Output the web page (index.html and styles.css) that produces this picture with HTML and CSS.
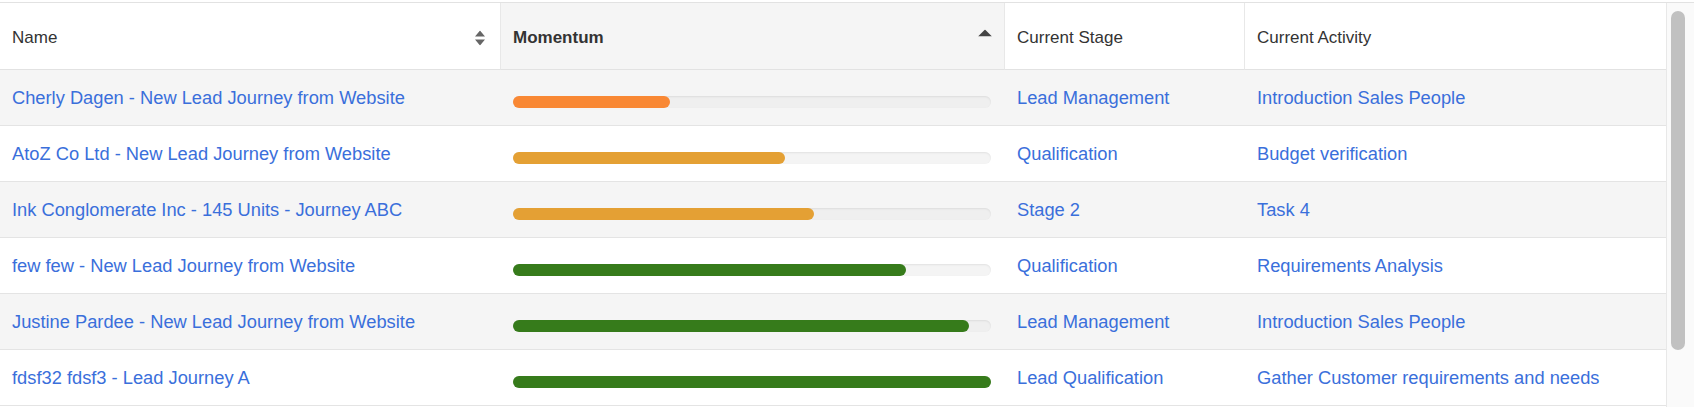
FILE: index.html
```html
<!DOCTYPE html>
<html>
<head>
  <title>Journeys</title>
  <link rel="stylesheet" href="styles.css">
</head>
<body>
  <div class="grid-wrap">
    <table class="journeys">
      <colgroup>
        <col class="col-name">
        <col class="col-momentum">
        <col class="col-stage">
        <col class="col-activity">
      </colgroup>
      <thead>
        <tr>
          <th class="sortable">
            <span>Name</span>
            <svg class="sort-icon" width="10" height="15" viewBox="0 0 10 15"><path d="M5 0 L10 6 L0 6 Z M5 15 L10 9 L0 9 Z" fill="#666"/></svg>
          </th>
          <th class="sortable sorted">
            <span>Momentum</span>
            <svg class="sort-icon" width="14" height="7" viewBox="0 0 14 7"><path d="M7 0 L14 7 L0 7 Z" fill="#444"/></svg>
          </th>
          <th>Current Stage</th>
          <th>Current Activity</th>
        </tr>
      </thead>
      <tbody>
        <tr>
          <td><a href="#">Cherly Dagen - New Lead Journey from Website</a></td>
          <td class="momentum"><div class="track"><div class="bar orange" style="width: 32.8%"></div></div></td>
          <td><a href="#">Lead Management</a></td>
          <td><a href="#">Introduction Sales People</a></td>
        </tr>
        <tr>
          <td><a href="#">AtoZ Co Ltd - New Lead Journey from Website</a></td>
          <td class="momentum"><div class="track"><div class="bar amber" style="width: 57%"></div></div></td>
          <td><a href="#">Qualification</a></td>
          <td><a href="#">Budget verification</a></td>
        </tr>
        <tr>
          <td><a href="#">Ink Conglomerate Inc - 145 Units - Journey ABC</a></td>
          <td class="momentum"><div class="track"><div class="bar amber" style="width: 63%"></div></div></td>
          <td><a href="#">Stage 2</a></td>
          <td><a href="#">Task 4</a></td>
        </tr>
        <tr>
          <td><a href="#">few few - New Lead Journey from Website</a></td>
          <td class="momentum"><div class="track"><div class="bar green" style="width: 82.2%"></div></div></td>
          <td><a href="#">Qualification</a></td>
          <td><a href="#">Requirements Analysis</a></td>
        </tr>
        <tr>
          <td><a href="#">Justine Pardee - New Lead Journey from Website</a></td>
          <td class="momentum"><div class="track"><div class="bar green" style="width: 95.4%"></div></div></td>
          <td><a href="#">Lead Management</a></td>
          <td><a href="#">Introduction Sales People</a></td>
        </tr>
        <tr>
          <td><a href="#">fdsf32 fdsf3 - Lead Journey A</a></td>
          <td class="momentum"><div class="track"><div class="bar green" style="width: 100%"></div></div></td>
          <td><a href="#">Lead Qualification</a></td>
          <td><a href="#">Gather Customer requirements and needs</a></td>
        </tr>
      </tbody>
    </table>
    <div class="scrollbar">
      <div class="thumb"></div>
    </div>
  </div>
</body>
</html>
```

FILE: styles.css
```css
body {
  font-family: "Liberation Sans", Arial, sans-serif;
  margin: 0;
  background-color: #fff;
  color: #333;
}
.grid-wrap {
  display: flex;
  margin-top: 2px;
  border-top: 1px solid #e2e2e2;
  height: 404px;
  overflow: hidden;
}
.journeys {
  width: 1666px;
  table-layout: fixed;
  border-collapse: separate;
  border-spacing: 0;
  align-self: flex-start;
}
.col-name { width: 501px; }
.col-momentum { width: 504px; }
.col-stage { width: 240px; }
.col-activity { width: 421px; }

.journeys th {
  height: 67px;
  padding: 3px 12px 0;
  font-size: 17px;
  font-weight: normal;
  text-align: left;
  color: #333;
  background-color: #fff;
  border-bottom: 1px solid #e2e2e2;
  border-right: 1px solid #e8e8e8;
  box-sizing: border-box;
}
.journeys th:last-child {
  border-right: none;
}
.journeys th.sortable {
  position: relative;
}
.journeys th.sorted {
  background-color: #f5f5f5;
  font-weight: bold;
}
.sort-icon {
  position: absolute;
  top: 50%;
  transform: translateY(-50%);
}
th:first-child .sort-icon {
  right: 15px;
  margin-top: 2px;
}
th.sorted .sort-icon {
  right: 12px;
  margin-top: -3px;
}

.journeys td {
  height: 56px;
  padding: 0 12px;
  font-size: 18.3px;
  border-bottom: 1px solid #e4e4e4;
  box-sizing: border-box;
  white-space: nowrap;
}
.journeys tbody tr:nth-child(odd) td {
  background-color: #f5f5f5;
}
.journeys td a {
  color: #3a6fdb;
  text-decoration: none;
}
.journeys td.momentum {
  vertical-align: top;
  padding-top: 26px;
  padding-right: 14px;
}
.track {
  height: 12px;
  border-radius: 6px;
  background-color: #f4f4f4;
  box-shadow: inset 0 1px 2px rgba(0, 0, 0, 0.08);
}
.journeys tbody tr:nth-child(odd) .track {
  background-color: #efefef;
}
.bar {
  height: 12px;
  border-radius: 6px;
}
.bar.orange { background-color: #f98834; }
.bar.amber { background-color: #e4a034; }
.bar.green { background-color: #367b1b; }

.scrollbar {
  width: 28px;
  flex-shrink: 0;
  background-color: #fafafa;
  border-left: 1px solid #e8e8e8;
  padding-top: 8px;
  box-sizing: border-box;
}
.thumb {
  width: 14px;
  height: 339px;
  margin-left: 4px;
  border-radius: 7px;
  background-color: #c1c1c1;
}
```
